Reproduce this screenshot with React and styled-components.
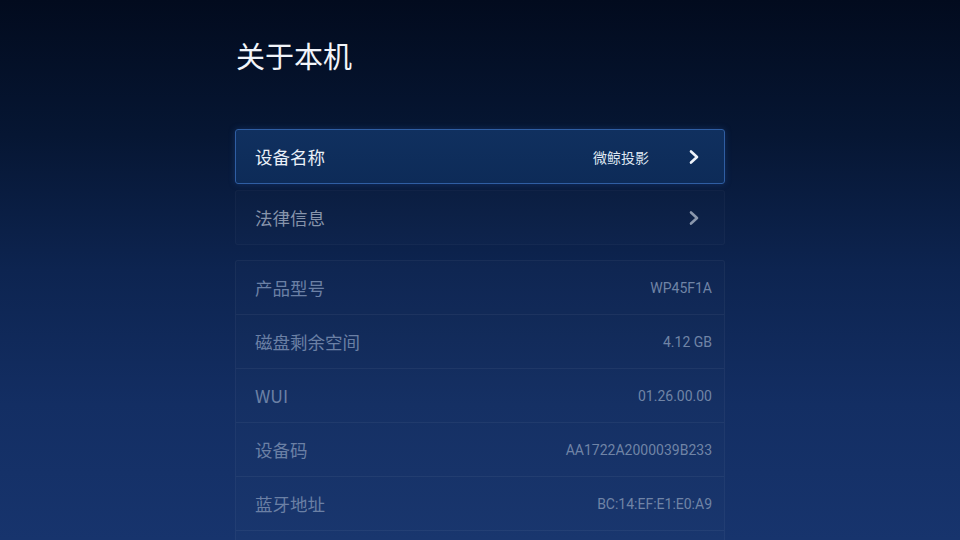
import React from 'react'
import styled, { createGlobalStyle } from 'styled-components'

const GlobalStyle = createGlobalStyle`
  html, body { margin: 0; padding: 0; }
  body { background: #020b1e; font-family: "Noto Sans CJK SC", "Noto Sans", sans-serif; }
`

const info = [
  { label: '产品型号', value: 'WP45F1A' },
  { label: '磁盘剩余空间', value: '4.12 GB' },
  { label: 'WUI', value: '01.26.00.00' },
  { label: '设备码', value: 'AA1722A2000039B233' },
  { label: '蓝牙地址', value: 'BC:14:EF:E1:E0:A9' },
  { label: '', value: '' },
]

const Chevron = ({ color }) => (
  <svg width="12" height="16" viewBox="0 0 12 16">
    <polyline points="3,2.5 9,8 3,13.5" fill="none" stroke={color} strokeWidth="2.6" strokeLinecap="round" strokeLinejoin="round" />
  </svg>
)

const App = () => {
  return (
    <Screen>
      <GlobalStyle />
      <Panel>
        <Title>关于本机</Title>
        <NavRow focused>
          <Label focused>设备名称</Label>
          <NavRight>
            <NavValue>微鲸投影</NavValue>
            <Chevron color="#eef3fa" />
          </NavRight>
        </NavRow>
        <NavRow>
          <Label>法律信息</Label>
          <NavRight>
            <Chevron color="#8a97ad" />
          </NavRight>
        </NavRow>
        <InfoGroup>
          {info.map((item, i) => (
            <InfoRow key={i}>
              <Label dim>{item.label}</Label>
              <InfoValue>{item.value}</InfoValue>
            </InfoRow>
          ))}
        </InfoGroup>
      </Panel>
    </Screen>
  )
}

const Screen = styled.div`
  width: 960px; height: 540px; overflow: hidden;
  background: linear-gradient(180deg, #020b1e 0%, #061633 25%, #0d2450 50%, #132e63 75%, #17346d 100%);
`

const Panel = styled.div`
  width: 490px; margin: 0 auto; padding-top: 37px;
  display: flex; flex-direction: column;
`

const Title = styled.h1`
  margin: 0 0 0 1px; font-size: 29px; line-height: 36px; font-weight: 400; color: #f2f5fa;
  height: 92px;
`

const NavRow = styled.div`
  height: 55px; box-sizing: border-box; margin-bottom: 6px;
  display: flex; align-items: center; justify-content: space-between;
  padding: 0 24px 0 19px; border-radius: 3px;
  background: ${p => p.focused ? 'linear-gradient(180deg, #10305f 0%, #0d2b58 100%)' : 'rgba(255,255,255,0.012)'};
  border: 1px solid ${p => p.focused ? '#2f5ea3' : 'rgba(255,255,255,0.03)'};
  box-shadow: ${p => p.focused ? '0 0 6px rgba(40,90,170,0.35)' : 'none'};
`

const Label = styled.span`
  font-size: 17.5px;
  color: ${p => p.focused ? '#eaf0f8' : p.dim ? '#6b80a5' : '#8794ab'};
`

const NavRight = styled.div`
  display: flex; align-items: center; gap: 39px;
`

const NavValue = styled.span`
  font-size: 14px; color: #dfe7f2;
`

const InfoGroup = styled.div`
  margin-top: 9px; border: 1px solid rgba(255,255,255,0.045); border-radius: 3px;
  background: rgba(255,255,255,0.012);
`

const InfoRow = styled.div`
  height: 54px; box-sizing: border-box;
  display: flex; align-items: center; justify-content: space-between;
  padding: 0 12px 0 19px;
  border-bottom: 1px solid rgba(255,255,255,0.05);
`

const InfoValue = styled.span`
  font-family: Roboto, "Noto Sans", sans-serif; font-size: 14px; color: #7084a6;
`

export default App
